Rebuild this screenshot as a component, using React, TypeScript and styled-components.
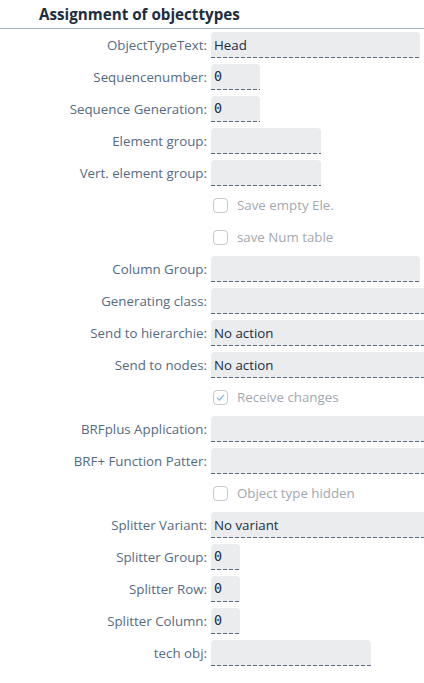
import React from "react";
import styled, { createGlobalStyle } from "styled-components";

const Global = createGlobalStyle`
  html, body { margin: 0; padding: 0; background: #fff; overflow: hidden; }
  body { font-family: "Open Sans", "Liberation Sans", sans-serif; }
`;

const Page = styled.div`
  width: 424px;
  overflow: hidden;
`;

const Header = styled.div`
  height: 28px;
  border-bottom: 1px solid #a8b2bc;
  display: flex;
  align-items: center;
  padding-left: 39px;
  font-size: 15.2px;
  font-weight: 700;
  color: #1d2d3e;
`;

const Form = styled.div`
  display: grid;
  grid-template-columns: 207px 1fr;
  grid-auto-rows: 32px;
  column-gap: 4px;
`;

const Label = styled.div`
  display: flex;
  align-items: center;
  justify-content: flex-end;
  font-size: 13.3px;
  color: #556b82;
  white-space: nowrap;
`;

const Cell = styled.div`
  display: flex;
  align-items: center;
  min-width: 0;
`;

const Input = styled.div<{ $w: number; $mono?: boolean }>`
  flex: none;
  box-sizing: border-box;
  width: ${(p) => p.$w}px;
  height: 26px;
  padding: 0 4px 1px 3px;
  display: flex;
  align-items: center;
  background-color: #eaecee;
  background-image: repeating-linear-gradient(
    to right,
    #556b82 0 4px,
    transparent 4px 6px
  );
  background-size: 100% 1px;
  background-position: left bottom;
  background-repeat: no-repeat;
  border-radius: 4px 4px 0 0;
  font-family: ${(p) =>
    p.$mono ? '"DejaVu Sans Mono", "Liberation Mono", monospace' : '"Open Sans", "Liberation Sans", sans-serif'};
  font-size: 13.3px;
  font-weight: ${(p) => (p.$mono ? 300 : 400)};
  color: #1d2d3e;
  white-space: nowrap;
`;

const Check = styled.label`
  display: flex;
  align-items: center;
  gap: 9px;
  padding-left: 2px;
  font-size: 13.3px;
  color: #a3a8ae;
`;

const Box = styled.span`
  box-sizing: border-box;
  width: 15px;
  height: 15px;
  border: 1px solid #c3c9cf;
  border-radius: 4px;
  display: flex;
  align-items: center;
  justify-content: center;
  background: #fff;
`;

type Row =
  | { kind: "field"; label: string; w: number; value?: string; mono?: boolean }
  | { kind: "check"; text: string; checked?: boolean };

const rows: Row[] = [
  { kind: "field", label: "ObjectTypeText:", w: 209, value: "Head" },
  { kind: "field", label: "Sequencenumber:", w: 49, value: "0", mono: true },
  { kind: "field", label: "Sequence Generation:", w: 49, value: "0", mono: true },
  { kind: "field", label: "Element group:", w: 110 },
  { kind: "field", label: "Vert. element group:", w: 110 },
  { kind: "check", text: "Save empty Ele." },
  { kind: "check", text: "save Num table" },
  { kind: "field", label: "Column Group:", w: 209 },
  { kind: "field", label: "Generating class:", w: 240 },
  { kind: "field", label: "Send to hierarchie:", w: 240, value: "No action" },
  { kind: "field", label: "Send to nodes:", w: 240, value: "No action" },
  { kind: "check", text: "Receive changes", checked: true },
  { kind: "field", label: "BRFplus Application:", w: 240 },
  { kind: "field", label: "BRF+ Function Patter:", w: 240 },
  { kind: "check", text: "Object type hidden" },
  { kind: "field", label: "Splitter Variant:", w: 240, value: "No variant" },
  { kind: "field", label: "Splitter Group:", w: 29, value: "0", mono: true },
  { kind: "field", label: "Splitter Row:", w: 29, value: "0", mono: true },
  { kind: "field", label: "Splitter Column:", w: 29, value: "0", mono: true },
  { kind: "field", label: "tech obj:", w: 160 },
];

export default function App() {
  return (
    <Page>
      <Global />
      <Header>Assignment of objecttypes</Header>
      <Form>
        {rows.map((r, i) =>
          r.kind === "field" ? (
            <React.Fragment key={i}>
              <Label>{r.label}</Label>
              <Cell>
                <Input $w={r.w} $mono={r.mono}>
                  {r.value ?? ""}
                </Input>
              </Cell>
            </React.Fragment>
          ) : (
            <React.Fragment key={i}>
              <Label />
              <Cell>
                <Check>
                  <Box>
                    {r.checked && (
                      <svg width="11" height="11" viewBox="0 0 11 11">
                        <path d="M2 5.8 L4.4 8.2 L9 2.8" fill="none" stroke="#84b4e6" strokeWidth="1.2" />
                      </svg>
                    )}
                  </Box>
                  {r.text}
                </Check>
              </Cell>
            </React.Fragment>
          )
        )}
      </Form>
    </Page>
  );
}
